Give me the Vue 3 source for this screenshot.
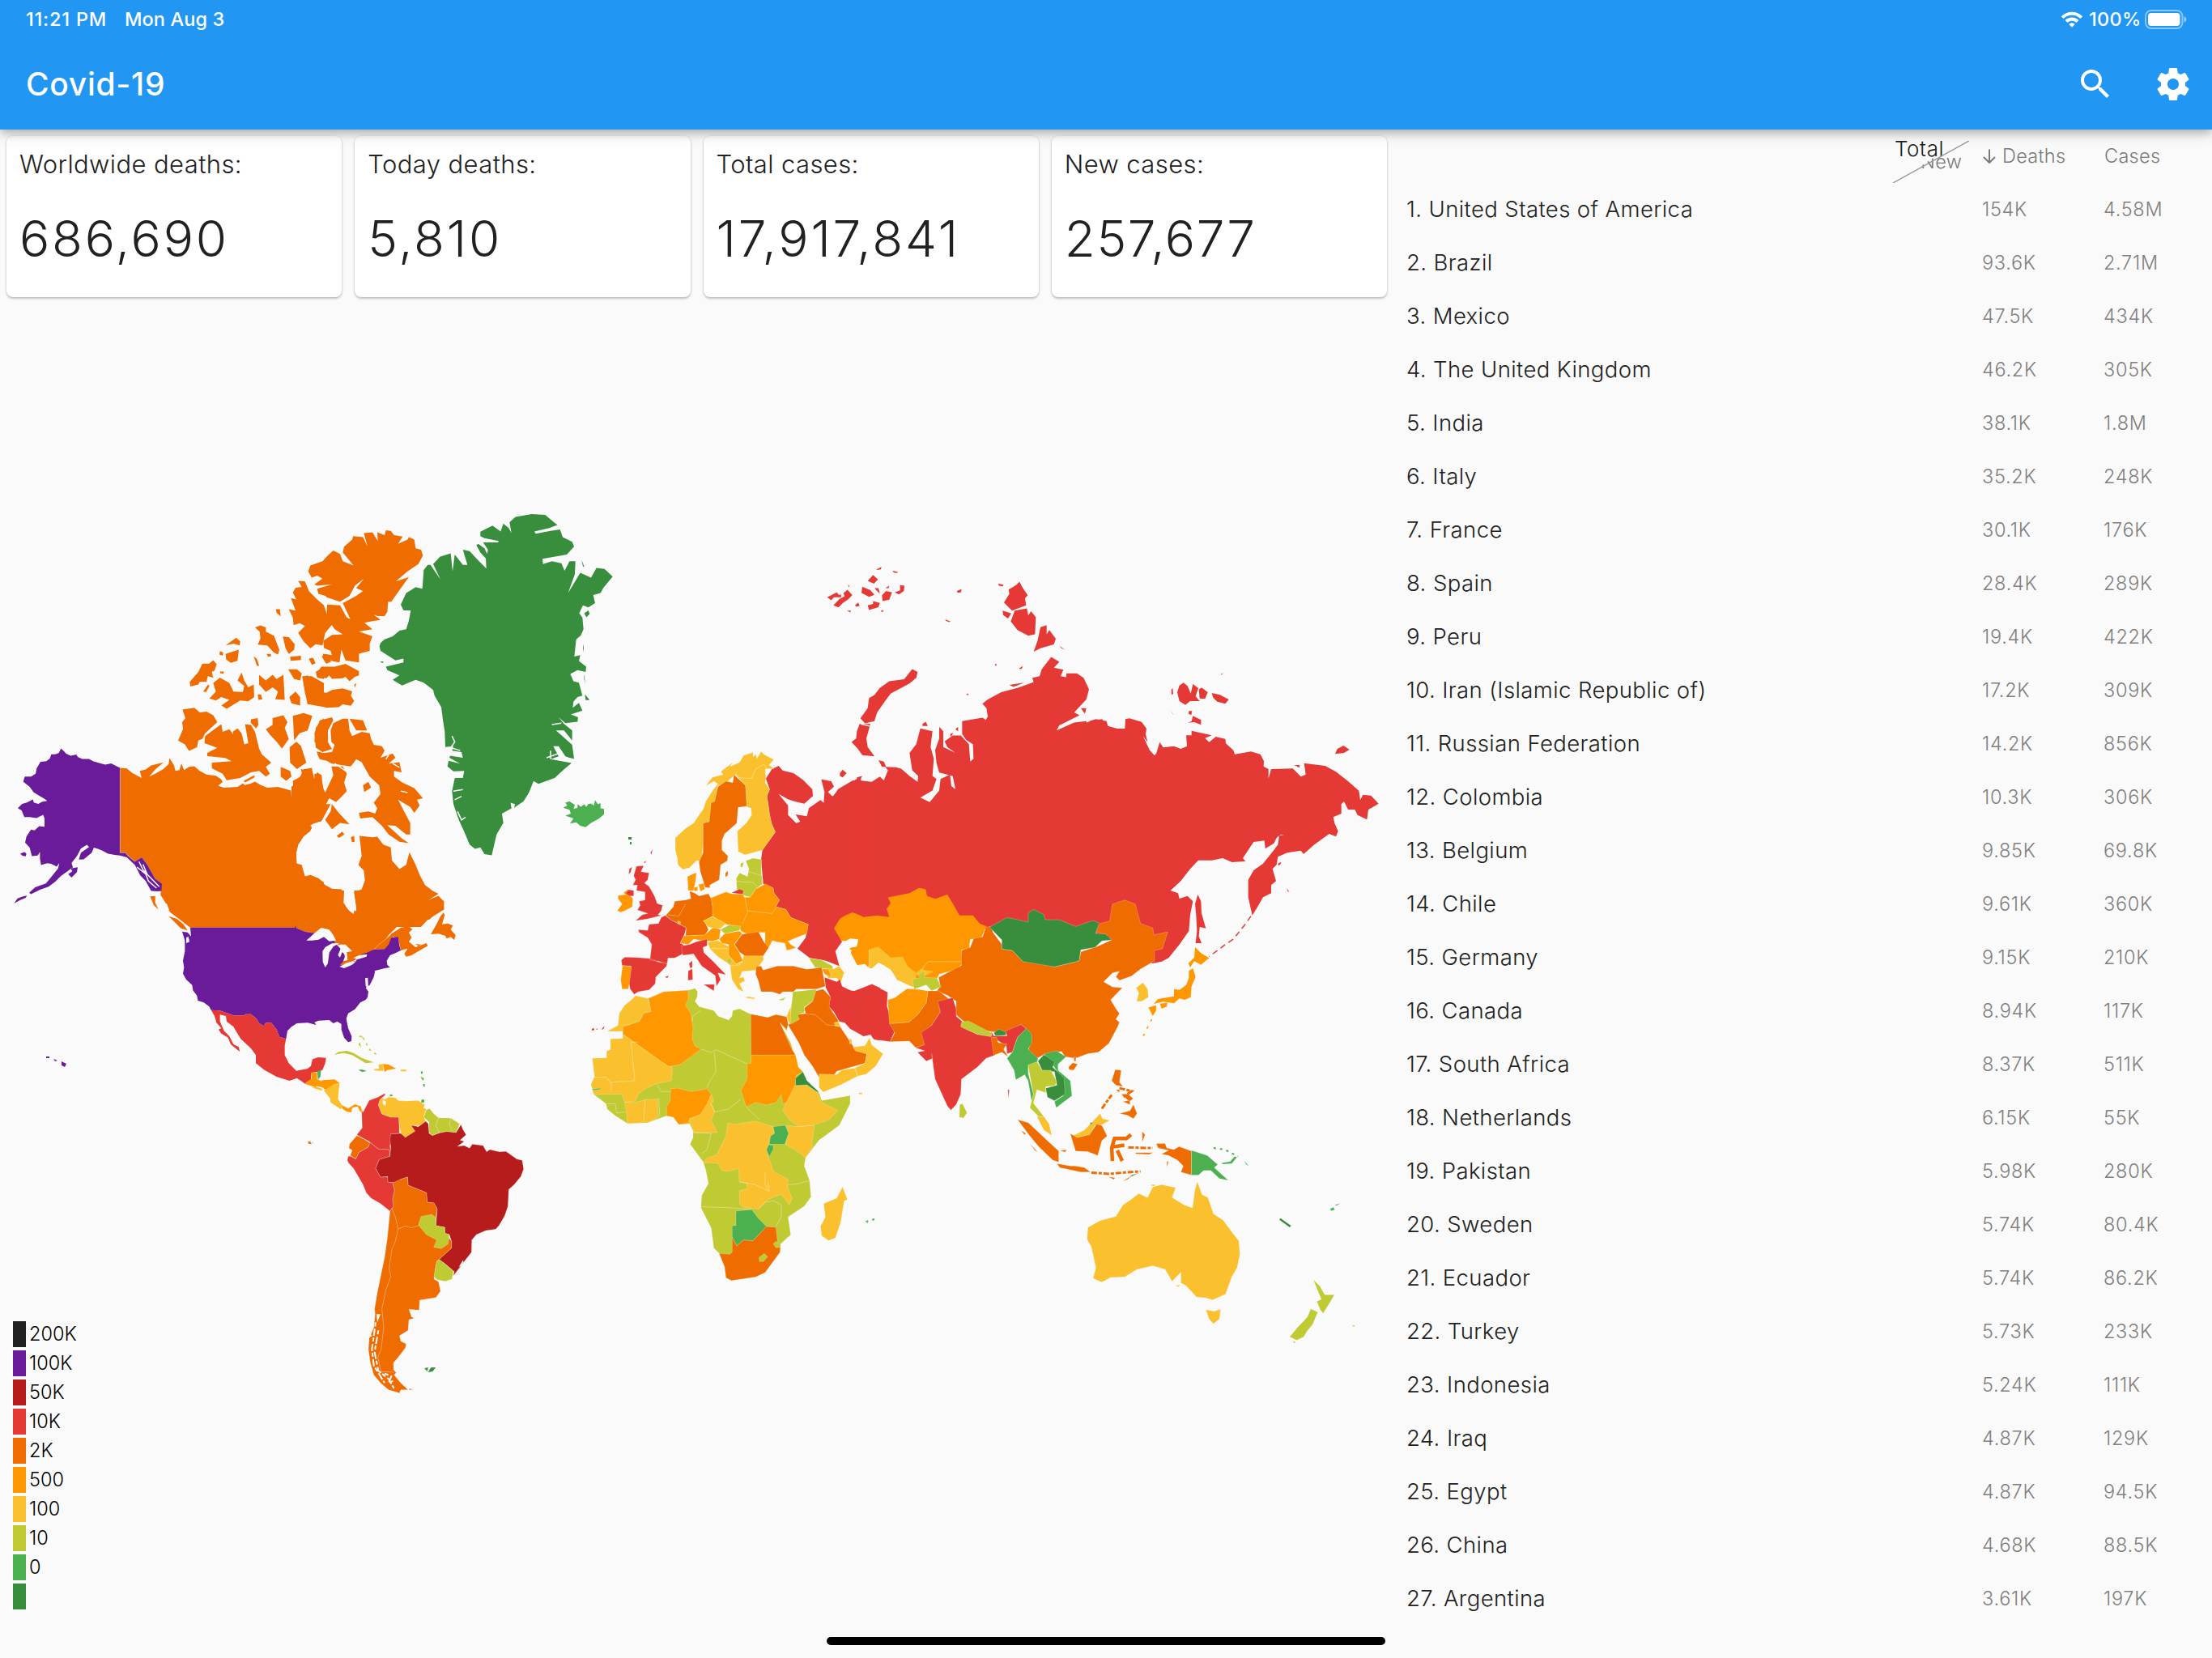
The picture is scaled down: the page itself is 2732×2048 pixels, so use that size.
<script setup>
const stats = [
  { label: 'Worldwide deaths:', value: '686,690' },
  { label: 'Today deaths:', value: '5,810' },
  { label: 'Total cases:', value: '17,917,841' },
  { label: 'New cases:', value: '257,677' },
]

const countries = [
  ['United States of America', '154K', '4.58M'],
  ['Brazil', '93.6K', '2.71M'],
  ['Mexico', '47.5K', '434K'],
  ['The United Kingdom', '46.2K', '305K'],
  ['India', '38.1K', '1.8M'],
  ['Italy', '35.2K', '248K'],
  ['France', '30.1K', '176K'],
  ['Spain', '28.4K', '289K'],
  ['Peru', '19.4K', '422K'],
  ['Iran (Islamic Republic of)', '17.2K', '309K'],
  ['Russian Federation', '14.2K', '856K'],
  ['Colombia', '10.3K', '306K'],
  ['Belgium', '9.85K', '69.8K'],
  ['Chile', '9.61K', '360K'],
  ['Germany', '9.15K', '210K'],
  ['Canada', '8.94K', '117K'],
  ['South Africa', '8.37K', '511K'],
  ['Netherlands', '6.15K', '55K'],
  ['Pakistan', '5.98K', '280K'],
  ['Sweden', '5.74K', '80.4K'],
  ['Ecuador', '5.74K', '86.2K'],
  ['Turkey', '5.73K', '233K'],
  ['Indonesia', '5.24K', '111K'],
  ['Iraq', '4.87K', '129K'],
  ['Egypt', '4.87K', '94.5K'],
  ['China', '4.68K', '88.5K'],
  ['Argentina', '3.61K', '197K'],
]

const legend = [
  ['black', '200K'],
  ['purple', '100K'],
  ['maroon', '50K'],
  ['red', '10K'],
  ['orange', '2K'],
  ['amber', '500'],
  ['yellow', '100'],
  ['lime', '10'],
  ['green', '0'],
  ['forest', ''],
]

// Each sheet has its own local grid; `at` places it on the map.
// A shape is [fill class, path]; classes starting with "line" are open strokes.
const sheets = [
  {
    name: 'canada-east', at: 'translate(360 620) scale(.33333 .35714)', shapes: [
      ['orange', 'M0 985L25 965 45 925 75 920 85 960 95 935 112 945 115 985 125 1005 135 985 155 945 148 915 190 915 205 940 195 970 205 1000 185 1020 165 1038 140 1025 128 1045 145 1045 128 1075 110 1105 85 1108 70 1120 75 1130 45 1150 25 1180 17 1215 18 1250 38 1255 50 1297 72 1292 100 1302 125 1325 150 1338 185 1340 192 1350 190 1385 200 1400 215 1415 230 1425 233 1412 242 1420 240 1400 236 1375 232 1350 260 1340 272 1310 268 1275 248 1255 260 1225 255 1180 252 1155 300 1160 318 1158 340 1185 368 1195 372 1240 400 1270 425 1255 437 1212 460 1255 475 1290 495 1325 530 1350 503 1378 545 1362 562 1380 565 1410 530 1430 505 1445 480 1470 0 1470Z'],
      ['orange', 'M62 240L70 220 115 205 135 185 155 168 180 180 190 205 230 220 190 175 195 155 225 130 228 118 265 122 282 155 268 108 300 105 320 135 318 105 345 115 350 98 368 100 380 115 412 120 395 145 430 130 435 122 455 130 460 160 480 165 487 185 470 215 430 240 386 275 435 260 400 305 370 345 358 345 355 380 345 395 320 395 305 390 330 408 300 412 270 418 300 440 250 448 300 465 290 490 290 515 250 525 250 555 200 548 185 510 178 555 150 550 115 535 118 525 150 530 145 515 120 505 118 480 150 460 190 458 160 440 130 400 132 355 180 358 205 400 218 405 190 350 240 325 265 308 240 298 268 265 235 290 215 325 180 345 130 330 120 318 140 300 175 290 125 325 100 318 95 300 150 285 95 290 85 285 115 265 95 255 75 262Z'],
      ['orange', 'M92 600L110 570 160 570 200 560 250 585 250 600 235 605 215 620 200 605 190 610 150 612 140 600 130 610 110 608ZM40 605L60 600 92 630 90 655 130 660 150 650 190 645 225 655 220 670 232 688 220 705 190 700 175 710 130 712 90 700 60 700 50 660Z'],
      ['orange', 'M5 740L45 730 77 740 60 790 30 800 10 825ZM90 850L85 800 105 755 150 745 155 755 135 790 135 830 150 855 115 865ZM145 790L155 765 190 750 210 750 215 790 225 810 260 795 290 800 295 820 305 840 335 845 345 860 330 885 375 870 385 885 360 905 400 900 408 935 380 930 380 950 410 970 455 990 487 1025 465 1030 475 1050 455 1075 440 1055 395 1030 420 1075 440 1110 440 1150 425 1150 385 1120 355 1118 410 1165 435 1180 400 1175 360 1150 335 1120 300 1090 255 1095 250 1075 285 1070 310 1078 318 1060 305 1040 330 1010 325 980 290 950 260 900 240 890 220 915 150 905 130 895 105 890 95 870 150 865 160 840 148 830ZM215 750L265 755 280 790 240 790ZM265 980l20-12 10 20-25 15ZM168 1155l20-15 8 10-20 12ZM220 1160l12-5 2 20-10 2ZM125 1100L145 1070 150 1045 175 1075 215 1115 180 1110 150 1132ZM112 535l20-8 15 25-18 8ZM66 545l15-5 8 18-12 5ZM232 632l8-5-4 15Z'],
      ['line-sea', 'M160 905L200 930 240 905 232 925 262 960 230 950M360 875L350 890M375 905L400 918M405 1000L430 1005'],
    ],
  },
  {
    name: 'canada-west', at: 'translate(0 620) scale(.33333 .34439)', shapes: [
      ['orange', 'M445 954L470 956 490 972 505 980 525 990 518 965 540 960 560 945 606 934 575 960 553 985 575 975 605 958 625 940 628 918 645 945 650 965 665 962 672 938 682 962 700 950 720 948 740 965 765 978 800 982 820 995 825 1005 808 1018 830 1025 880 1022 900 1010 910 1018 912 1040 920 1068 905 1040 890 1020 930 1010 945 1003 965 1015 990 1025 1030 1022 1060 1030 1078 1035 1080 1060 1088 1035 1085 1000 1105 990 1120 980 1115 958 1150 965 1165 1000 1165 975 1180 975 1195 1010 1200 1040 1200 1120 1180 1148 1150 1158 1112 1150 1155 1165 1150 1180 1125 1200 1105 1230 1097 1260 1100 1300 1115 1303 1130 1343 1150 1338 1180 1350 1200 1365 1200 1538 1160 1548 1120 1530 1095 1525 707 1525 690 1515 665 1495 650 1480 625 1465 640 1450 615 1440 595 1410 598 1370 575 1352 545 1300 525 1275 500 1290 475 1270 465 1258 445 1258Z'],
      ['orange', 'M676 745L720 738 740 755 765 752 790 765 805 790 760 830 750 850 735 855 730 880 700 893 685 870 660 856 678 815 675 790 687 775ZM760 840L820 797 825 825 850 815 865 835 862 825 880 812 895 830 905 870 920 865 908 797 930 800 945 825 960 885 970 905 1005 935 985 950 1000 975 985 985 960 965 930 970 890 990 840 998 825 975 785 955 785 935 858 930 835 918 768 912 768 900 805 882 758 865ZM985 815L1010 800 1010 775 1050 765 1065 790 1055 810 1070 850 1045 885 1025 860 1000 835ZM1073 880L1098 860 1115 875 1135 935 1100 958 1075 935ZM1105 283L1130 285 1145 320 1175 350 1200 370 1210 400 1235 435 1205 470 1195 515 1170 510 1150 525 1125 500 1105 470 1130 445 1110 435 1088 442 1085 415 1070 385 1095 390 1078 345 1098 350 1085 325 1095 308 1118 305Z'],
      ['orange', 'M776 705L800 680 790 650 815 630 850 650 865 680 900 682 905 660 880 640 895 612 905 640 920 665 940 655 942 700 920 715 890 712 840 742 820 730 850 710 820 700 800 712ZM703 645L735 610 750 580 775 580 790 568 803 582 795 605 785 610 790 630 770 625 765 645 740 645 735 655 705 662ZM753 680l18-25 5 5-12 22ZM960 620L985 640 1010 620 1025 635 1050 620 1055 710 1020 708 1030 680 1010 665 985 682 960 655ZM1072 700L1095 680 1112 700 1112 730 1080 722ZM836 515L875 487 890 500 888 515 865 508ZM836 545L885 530 880 570 855 577 838 565ZM945 450L965 443 985 450 985 465 1015 480 1035 530 1030 547 1015 540 990 515 955 512 965 490 962 465ZM1048 483L1070 485 1092 510 1090 530 1070 545 1058 525ZM1022 385l15 0 3 25-15-12ZM1075 555l40-3 0 15-38 3ZM1068 600L1100 600 1118 615 1112 640 1090 635ZM940 553l12 10 8 25-8 0ZM1145 562l12-3 10 20-12 5ZM815 535l12 5-2 12-12-5ZM930 780l25-5 2 25-8 12-20-20ZM1040 950L1075 965 1080 985 1060 1000 1040 985ZM955 690l12 0 5 18-14 2ZM988 545l15 0 2 8-12 2ZM815 608l15 0-2 8-12-2ZM1120 625l35 0 45 25 0 85-60-10-8-60ZM1170 610l30-20 0 45-25-5ZM1165 860L1170 810 1200 775V890ZM1173 895l27 5 0 25-15-2ZM903 1000l40-20 0 8-35 18Z'],
      ['purple', 'M445 954L428 946 412 938 390 942 365 936 345 930 330 922 305 922 288 915 283 906 262 910 245 903 238 895 226 884 218 900 205 905 190 905 185 920 172 930 150 932 136 955 132 975 115 985 92 985 86 1003 110 1022 125 1042 142 1052 165 1065 175 1072 155 1076 142 1083 125 1078 122 1067 100 1078 82 1083 66 1098 80 1106 90 1130 110 1130 135 1134 160 1122 165 1135 165 1165 145 1163 128 1178 115 1175 98 1200 93 1222 110 1240 118 1270 140 1268 148 1255 148 1280 152 1302 175 1296 190 1298 210 1308 220 1295 215 1315 190 1345 170 1368 130 1382 108 1402 115 1407 150 1390 180 1380 205 1362 225 1342 250 1325 270 1310 265 1295 285 1270 300 1243 322 1230 330 1238 300 1258 292 1283 310 1282 340 1258 348 1240 365 1245 378 1250 400 1262 425 1266 445 1268ZM445 1268L470 1275 500 1302 520 1340 540 1360 560 1395 585 1397 598 1395 600 1370 575 1352 545 1300 525 1275 500 1290 475 1270 465 1258 445 1258ZM52 1440L65 1422 85 1415 100 1412 95 1420 75 1428ZM253 1335L268 1325 262 1315 288 1310 285 1328 265 1347ZM75 1262l15-6 8 5-3 10-12-2Z'],
      ['line-sea', 'M515 1290L530 1320 560 1350 590 1380M508 1310L540 1335 550 1360 580 1385M530 1300L545 1335'],
      ['line', 'M445 954V1258L465 1258 475 1270 500 1290'],
    ],
  },
  {
    name: 'north-america', at: 'translate(180 1100) scale(.33333)', shapes: [
      ['orange', 'M165 137L140 118 110 95 90 80 60 0H735L733 45 755 80 770 88 782 70 772 0H1060L1085 12 1043 38 1090 28 1105 40 1105 70 1075 85 1050 108 1000 108 950 113 925 140 900 165 890 180 910 160 945 138 975 132 988 145 975 155 985 175 975 190 1000 210 1040 195 1045 205 1010 225 985 240 965 245 958 235 970 215 945 222 935 175 915 172 900 205 885 217 845 218 820 235 790 240 775 258 740 270 720 277 730 262 740 240 735 215 700 192 690 165 675 148 650 140 625 158 590 152 560 140 553 130 553 137Z'],
      ['orange', 'M1056 162L1075 130 1092 95 1103 82 1108 90 1098 125 1120 122 1138 130 1130 145 1148 165 1143 183 1130 172 1115 178 1110 168 1085 160ZM983 120l20 2 18 10-15 2ZM85 95L115 105 140 125 155 148 130 140 105 115ZM16 22L35 20 35 45 47 70 30 55ZM1000 198l20 2-10 6Z'],
      ['purple', 'M165 137H553V130L560 140 590 152 625 158 690 165 700 192 735 230 740 262 720 277 780 260 790 240 820 230 845 218 885 217 900 200 910 175 935 172 940 205 945 222 925 232 905 240 893 260 895 275 905 285 885 288 850 298 845 320 830 350 815 360 825 375 822 395 815 405 795 415 775 440 750 455 743 475 750 510 763 540 762 558 750 562 735 545 725 515 725 495 710 485 695 492 680 480 640 482 625 488 632 498 600 490 560 492 540 505 525 520 520 550 495 542 485 515 465 490 445 490 437 502 420 492 410 475 390 458 368 458 365 463 325 463 275 445 242 443 235 430 215 415 193 408 190 390 175 370 172 350 150 330 138 308 142 285 138 260 145 225 145 185 135 152 155 155 168 170Z'],
      ['orange', 'M710 193L750 205 765 225 800 240 775 258 740 270 720 277 732 262 740 240Z'],
      ['sea', 'M595 185L612 170 625 158 650 138 680 145 695 165 705 185 680 188 660 172 640 182 615 185ZM655 225L665 210 690 196 718 195 695 208 680 230 675 270 665 285 656 265ZM715 200L740 200 765 225 745 228 748 258 732 262 740 240 728 228 720 248 712 240 722 215ZM718 282L745 268 780 262 765 275 735 288ZM770 250L790 240 820 236 818 245 785 255ZM813 325l10-2 2 42-10-12ZM150 175l8-5 4 20-12 5ZM845 298l35-6-20 8Z'],
      ['red', 'M242 443L275 445 325 463 365 463 368 458 390 458 410 475 420 492 437 502 445 490 465 490 485 515 495 542 520 550 515 575 515 610 530 640 558 668 600 660 612 650 618 625 640 618 668 620 665 640 655 665 635 672 612 675 612 700 592 717 575 705 560 695 533 705 485 690 440 665 408 640 408 610 390 585 352 550 325 505 300 485 297 465 275 460 275 485 290 520 310 540 325 570 345 580 348 597 315 570 305 545 280 530 270 515 280 510 262 490 255 465Z'],
      ['amber', 'M612 675L635 675 635 700 650 705 630 730 592 717 592 712 615 697ZM640 715L655 703 700 700 718 713 700 718 685 728 668 740 655 730 635 725ZM727 795L750 808 775 792 797 800 803 822 795 820 785 800 765 805 762 822 745 820 728 808ZM880 643L900 645 928 660 895 665 885 673Z'],
      ['green', 'M636 672L650 663 647 690 638 702ZM788 665l12-2 18 5-15 5ZM1022 775h10v10h-12Z'],
      ['yellow', 'M615 730L635 728 655 735 652 742ZM660 742L690 722 718 713 712 772 730 800 722 810 685 785 683 770ZM845 662L865 660 862 645 880 643 880 668 848 667ZM945 664h20v6h-20Z'],
      ['lime', 'M698 608L715 598 745 594 770 602 800 620 845 637 815 640 790 625 765 610 735 602ZM785 540l15-2 5 10-5-4ZM788 570l6-8 4 20Z'],
      ['line-lime-dot', 'M805 545L830 590 860 612M1020 690L1032 712'],
      ['line-green-dot', 'M1022 670L1034 740M905 760L925 756'],
      ['line', 'M845 218L870 195 890 180 910 162'],
    ],
  },
  {
    name: 'south-america', at: 'translate(380 1300) scale(.33333)', bordered: true, shapes: [
      ['red', 'M182 305L202 280 200 215 205 222 228 178 262 165 285 152 288 157 268 175 262 195 275 228 308 240 338 240 340 300 308 302 313 320 305 345 308 385 300 360 262 358 228 330 200 315Z'],
      ['red', 'M150 385L160 385 178 395 190 370 225 350 230 332 262 358 302 360 305 385 265 397 252 430 270 462 297 462 297 480 315 483 322 510 315 545 318 570 305 588 270 560 235 540 217 520 205 490 170 430 152 410 147 400Z'],
      ['yellow', 'M268 175L277 168 285 175 300 165 325 168 335 178 365 180 410 178 435 195 428 205 440 210 430 235 438 258 410 272 383 270 398 292 375 315 350 312 342 285 337 240 308 240 275 228 262 195Z'],
      ['sea', 'M278 175L290 182 288 198 278 190Z'],
      ['lime', 'M440 212L452 208 468 228 485 242 530 243 563 265 550 297 515 293 488 298 460 308 450 295 450 258 430 240Z'],
      ['maroon', 'M308 302L345 300 362 315 398 292 383 270 410 275 438 255 447 265 450 300 462 308 490 298 515 293 550 297 568 267 575 285 587 305 565 325 580 330 555 348 580 345 600 355 610 340 650 345 663 368 675 360 710 368 735 367 775 395 795 400 800 432 790 460 765 490 745 508 742 570 730 605 710 640 697 655 660 660 625 675 608 695 607 740 580 775 540 828 543 812 505 780 485 768 533 725 533 700 525 675 508 670 508 648 475 642 480 580 468 558 443 555 440 520 372 492 370 462 345 470 325 483 297 480 297 460 270 462 252 430 265 397 305 385 308 350 305 325Z'],
      ['orange', 'M155 340L182 308 210 322 230 335 225 350 190 370 178 395 158 382 165 362 153 355Z'],
      ['orange', 'M315 483L345 470 370 462 372 492 440 520 443 555 468 558 480 580 475 610 475 642 510 670 533 700 533 725 485 768 475 790 468 840 485 850 492 885 475 908 415 918 413 955 375 952 385 980 395 985 375 990 372 1030 340 1050 345 1070 365 1080 362 1095 335 1130 318 1150 318 1175 328 1187 320 1195 345 1225 372 1250 345 1250 340 1262 300 1250 270 1225 245 1195 232 1150 225 1100 228 1060 245 1020 250 970 248 950 258 890 285 760 295 690 303 610 305 588 318 570 315 545 322 510Z'],
      ['lime', 'M410 640L420 608 460 600 475 612 475 642 508 648 508 670 525 675 520 710 495 727 467 722 478 695 440 675ZM478 772L490 768 540 810 535 840 510 848 480 842 468 830Z'],
      ['sea', 'M575 770l-15 25 10-5 8-15ZM255 970l15 0-12 30Z'],
      ['line', 'M312 578L325 610 335 655 325 700 312 730 302 800 308 830 290 880 275 950 282 1020 272 1100 260 1130 272 1183 320 1185M335 655L360 643 385 650 410 642M485 242L475 270 488 298M530 243L525 265 535 290'],
      ['line-sea-dot', 'M252 1000L238 1100 245 1160 285 1225M262 1030L248 1110 262 1180 300 1210 320 1245M285 1190L310 1200 300 1225 320 1215M228 1040L240 1060M568 325L590 320 605 340'],
      ['forest', 'M432 1170l15-3-4 16ZM445 1185l12-18 18 0-12 16Z'],
      ['orange', 'M375 1246l18 2-16 3ZM0 330l10 0 5 10-12-2ZM16 332h3v3h-3Z'],
    ],
  },
  {
    name: 'greenland', at: 'translate(360 620) scale(.33333 .35714)', shapes: [
      ['forest', 'M326 500L330 488 345 475 375 465 400 445 425 440 435 410 442 375 415 375 405 355 425 315 460 295 485 300 490 235 505 218 515 218 552 268 525 215 550 190 590 178 597 240 605 182 635 218 652 218 635 165 660 170 690 200 722 230 720 195 700 175 685 150 692 145 715 160 725 180 728 165 710 140 765 140 768 135 715 125 700 118 700 103 745 82 775 102 785 75 805 90 815 108 808 70 830 52 890 42 940 45 985 80 955 90 900 102 905 110 960 100 995 95 1005 122 1040 138 1047 155 1020 182 930 197 932 215 965 205 1000 212 1012 238 1030 205 1052 205 1050 250 1025 315 1070 245 1110 262 1130 228 1160 232 1190 258 1155 298 1145 315 1118 322 1125 350 1100 365 1080 358 1066 385 1078 400 1082 440 1072 462 1055 475 1048 535 1070 530 1065 550 1092 570 1090 588 1060 582 1033 595 1045 620 1065 625 1078 670 1060 675 1045 690 1042 712 1065 695 1078 722 1035 735 1062 745 1060 760 1015 765 990 745 1010 768 1040 790 1040 825 1010 790 980 790 1040 840 1047 888 1030 885 1015 880 990 845 970 845 990 880 960 890 1038 903 1010 925 975 955 915 975 897 965 880 1005 860 1035 825 1058 828 1045 812 1040 815 1060 780 1078 785 1110 760 1150 750 1190 742 1222 715 1218 700 1195 680 1200 660 1185 640 1140 620 1100 600 1045 595 1000 605 955 635 955 640 930 600 932 578 915 582 895 625 905 585 885 588 878 635 885 630 865 595 860 600 845 570 848 568 795 562 760 555 710 530 670 525 650 490 625 460 615 410 635 375 615 400 600 355 582 350 570 415 555 415 542 385 548 355 530 330 515ZM1075 200l10 25-5-2ZM1085 385l15-10 5 12-12 12ZM1080 490l3 15-3 15ZM1085 595l3 35-4-20ZM1087 665l18 20-15 0ZM328 552l14 0-5 6Z'],
      ['green', 'M1007 1058L1022 1050 1015 1040 1030 1035 1050 1048 1045 1062 1060 1058 1060 1045 1072 1055 1085 1045 1092 1055 1100 1045 1110 1043 1120 1050 1125 1032 1135 1045 1145 1042 1145 1060 1158 1062 1158 1080 1140 1095 1110 1110 1090 1125 1070 1120 1055 1108 1032 1112 1045 1095 1015 1085 1035 1078 1030 1065Z'],
      ['line-sea', 'M965 770L1000 765M945 885L990 870M960 860L960 890M600 1000L635 995M605 1030L630 1018M615 1070L630 1100 645 1090M595 810L605 830 590 850 625 860'],
    ],
  },
  {
    name: 'russia-centre', at: 'translate(980 680) scale(.33333 .35714)', shapes: [
      ['red', 'M165 825L220 795 235 800 235 785 255 780 245 795 290 800 320 782 335 795 350 760 340 748 380 750 400 755 430 780 460 800 462 780 440 760 430 700 455 670 470 615 515 625 508 680 520 720 515 780 530 790 515 830 470 855 505 870 540 830 545 790 580 775 585 815 600 825 590 780 540 768 530 735 525 690 540 650 540 610 555 625 555 680 600 700 570 680 560 660 590 640 620 640 650 670 655 730 667 720 665 670 640 655 625 635 625 590 700 578 712 585 702 600 720 575 715 545 700 530 720 515 770 490 830 475 890 455 885 440 912 435 920 410 955 368 985 385 965 405 1000 412 990 435 1010 438 1012 425 1050 425 1075 440 1095 480 1085 515 1040 560 1060 570 985 605 975 622 1040 595 1085 590 1090 620 1100 588 1145 583V1330L725 1310 600 1310 150 1340H120V850L150 850Z'],
      ['red', 'M215 662L232 650 235 625 245 600 285 600 270 650 275 680 300 712 255 708 238 685ZM248 580L275 545 280 510 300 500 320 475 355 452 410 445 440 410 460 420 455 440 430 460 360 495 340 520 310 560 300 590 265 598ZM315 725l20 5 8 18-15 0ZM172 770l10-12 15 12-15 15-10-5ZM478 600l12-8 8 15-20 0ZM580 635l12-5-8 15ZM600 618l10-8 0 15ZM555 592l14 0ZM1065 545l20 0-5 20ZM640 497l8-3-2 8Z'],
      ['red', 'M125 162l35-17 10 10 5-5 2 12-27 0-10 10ZM148 190l22-22 20-10-5-10 15-12 18 18-15 15-20 12-8 8-8 8ZM255 125l30 12 15 16-20 7-28-14ZM275 105l20-20 18 15-15 15ZM328 155l15-15 22 5-10 25-25 5ZM375 145l20-7 0-18 16 2-2 18-18 12ZM275 190l20-5 0-10 25 6-5 15-35 10ZM300 130l15 0 5 20ZM228 190l12-10 5 12-12 2ZM308 65l18-8-2 8-15 2ZM368 70l20 5-5 3-12-2ZM605 140l18-6-2 10-12 2ZM562 238l20 8-5 2-12-5ZM758 115l20 3-2 6-15-2ZM340 130l15-8-2 8ZM322 210l10-5 0 8ZM835 408l15-8-5 10ZM747 393l5 0 0 5-5 0ZM202 120h5v8ZM198 208l14 0 0 6Z'],
      ['red', 'M780 180L800 150 797 135 825 120 837 108 850 130 868 155 858 165 862 190 810 208ZM775 208l32 10-12 17-18-12ZM805 245L820 208 865 200 870 225 880 210 898 230 895 290 870 295 850 285 830 275ZM890 350L905 310 915 265 938 258 938 290 948 275 972 305 965 325 915 338ZM985 330l20 12-12-4ZM800 465l55-8-40 15Z'],
      ['amber', 'M150 1300L170 1275 210 1250 230 1255 260 1268 310 1262 355 1268 345 1240 360 1220 350 1200 430 1185 465 1167 490 1172 495 1195 525 1205 570 1190 590 1220 615 1262 665 1262 690 1290 715 1300 695 1340 655 1345 650 1380 622 1380 625 1430 600 1450 540 1465 525 1490 455 1500 415 1500 280 1440 240 1440 205 1380 240 1350 180 1350 150 1320Z'],
      ['yellow', 'M280 1380L315 1370 360 1408 405 1405 425 1440 455 1460 490 1435 480 1450 520 1455 490 1470 455 1468 445 1510 400 1495 350 1450 280 1445Z'],
      ['sea', 'M150 1385L180 1358 210 1342 240 1345 235 1370 200 1375 215 1382 210 1400 230 1435 265 1430 285 1450 315 1425 335 1435 360 1450 385 1485 430 1505 400 1515 385 1540 370 1545 350 1525 290 1500 220 1525 185 1505 190 1465 165 1420Z'],
      ['line', 'M480 1440L500 1422 620 1422M280 1445V1380'],
      ['line-sea', 'M250 600L285 608'],
    ],
  },
  {
    name: 'russia-east', at: 'translate(1340 760) scale(.33333)', shapes: [
      ['red', 'M0 400L40 385 80 392 85 410 120 420 148 420 150 385 165 382 210 395 228 420 225 440 232 470 215 448 240 500 258 520 265 510 277 470 290 490 330 485 355 495 378 485 375 445 395 445 395 428 470 445 445 455 460 470 485 450 520 458 522 475 550 500 555 515 615 505 650 515 663 540 662 560 680 570 680 605 690 570 770 568 800 598 818 590 812 548 890 558 930 580 975 615 1015 650 1020 685 1030 665 1060 668 1088 698 1060 715 1050 720 1045 757 1010 740 1000 720 975 720 960 690 950 700 950 735 920 748 925 770 938 800 930 820 905 810 850 850 810 885 800 872 750 880 715 895 710 925 695 940 708 985 690 1000 690 1030 660 1045 640 1080 620 1112 605 1045 605 980 625 945 660 920 700 870 715 850 720 815 738 815 725 812 710 825 700 845 668 865 665 835 625 840 585 900 595 912 545 915 510 900 470 908 420 908 390 940 355 985 317 1020 345 1030 350 1050 380 1040 400 1060 390 1110 385 1170 350 1220 310 1270 285 1283 250 1290 0 1150Z'],
      ['red', 'M418 1035L430 1060 432 1105 448 1160 425 1155 422 1190 432 1215 410 1215 415 1170 412 1110 408 1070ZM342 285L350 260 365 250 380 262 392 290 400 255 420 270 410 300 425 318 390 318 372 332 350 318ZM422 275L432 268 455 285 445 310 425 308ZM470 288L500 295 533 312 520 328 490 320 475 305ZM380 398l15-5 5-20 30 15 0 18-25-10ZM385 355l12 0-3 15-10-5ZM320 275l5-5 2 22-6 2ZM318 355l10 16-4-8ZM502 220l10-6-4 6ZM927 514L935 495 958 483 980 498 960 510ZM775 555l20 0 0 10ZM748 1012l10 14-7-4ZM715 920l12-6-2 8-8 6ZM12 1020l5 5Z'],
      ['line-red-dot', 'M615 1115L590 1150 550 1200 520 1220 460 1265'],
      ['amber', 'M383 1290L405 1268 408 1230 430 1252 460 1270 430 1295 405 1282 390 1305ZM385 1318L400 1308 410 1340 395 1375 392 1415 370 1425 350 1420 330 1438 290 1432 255 1440 270 1422 330 1412 330 1385 350 1388 375 1370 385 1345Z'],
      ['yellow', 'M190 1380L215 1362 232 1385 235 1415 210 1430 192 1430 200 1400Z'],
    ],
  },
  {
    name: 'asia-oceania', at: 'translate(1040 1100) scale(.43367 .3699)', bordered: true, shapes: [
      ['orange', 'M410 122L425 120 430 140 455 180 455 195 485 200 515 237 560 240 605 255 675 235 680 205 730 185 768 165 760 150 730 140 722 143 735 110 762 102 770 45 805 32 835 45 850 110 885 125 888 148 928 138 912 195 890 200 890 235 850 262 825 285 790 300 780 288 790 270 770 275 745 305 770 322 798 325 765 365 780 395 790 410 780 430 790 440 785 455 760 510 730 540 700 545 665 560 635 555 625 537 580 545 555 560 530 535 540 490 525 462 510 447 465 475 430 472 380 465 345 435 325 415 325 370 300 350 270 335 280 320 275 290 340 250 340 200 365 190 375 160 400 155ZM645 590l12-15 14 5-12 20-12-2ZM660 555h6l0 15-5 0Z'],
      ['forest', 'M420 122L470 90 530 105 530 75 545 63 575 80 578 97 620 98 665 120 715 100 732 108 722 143 750 145 768 165 740 168 720 190 680 198 675 235 605 255 515 237 485 200 455 195 455 165Z'],
      ['red', 'M0 330L35 335 85 312 130 340 128 385 140 435 150 470 137 505 90 497 80 480 60 485 0 430Z'],
      ['amber', 'M130 365L150 358 185 328 215 330 245 335 240 375 215 415 190 440 135 445Z'],
      ['lime', 'M200 295L222 292 218 280 235 268 235 290 270 292 282 322 255 335 240 315 205 330Z'],
      ['orange', 'M135 445L190 440 215 415 240 375 245 335 275 335 305 362 275 375 280 405 255 450 235 470 238 515 210 525 192 503 137 505 150 475Z'],
      ['red', 'M272 370L315 358 325 395 325 420 345 440 340 455 385 480 425 487 425 470 432 485 470 485 465 470 510 447 525 462 500 490 485 540 470 545 468 520 430 490 435 550 410 560 385 590 340 630 338 680 325 715 310 733 300 720 265 630 255 545 258 560 240 570 215 540 235 535 210 525 235 515 225 475 255 450 280 405ZM472 665h4l-2 30Z'],
      ['orange', 'M425 492L440 490 445 508 470 512 460 530 473 555 455 540 432 550Z'],
      ['lime', 'M340 440L360 435 425 475 425 488 385 480 338 455ZM335 715l8-3 13 30-10 18-12-3Z'],
      ['forest', 'M432 475l15-12 20 10 0 10-30 2Z'],
      ['green', 'M470 560L485 540 500 490 525 460 540 480 540 510 530 530 558 560 555 575 530 585 530 610 545 680 540 705 530 635 520 615 495 632 490 600ZM575 545L610 535 638 555 615 580 615 600 650 635 655 685 610 725 605 705 630 685 632 640 605 590Z'],
      ['forest', 'M558 570L575 548 605 572 600 590 632 625 635 680 605 702 585 690 580 660 612 650 605 605 570 600Z'],
      ['lime', 'M530 582L555 572 570 600 595 600 612 640 605 652 580 655 580 675 555 665 545 710 575 755 560 755 535 725 545 680 537 630Z'],
      ['yellow', 'M555 755L575 755 590 780 597 818 575 800ZM655 820L690 800 735 745 742 762 762 768 740 782 720 785 705 815 670 825Z'],
      ['orange', 'M650 812L670 825 705 815 725 780 740 785 755 820 740 835 728 885 700 872 665 870ZM500 765L530 775 580 830 617 870 617 907 600 900 560 855 535 820ZM612 912L650 920 665 920 690 925 708 940 680 940 620 925ZM758 955l20 5-5 5ZM800 970l28-20-15 15ZM778 598L795 600 790 640 800 655 780 650 768 635ZM790 745L820 735 830 715 840 745 830 762 812 750ZM795 680l20 0 14 15-10 10ZM800 705l20-5 0 15ZM780 665l10 0 0 10ZM895 845L920 845 925 860 945 865 960 855 995 870 995 950 965 940 972 920 955 900 930 885 910 880 930 868 900 860ZM855 805l8 10-8 25ZM835 875l50 0-10 6-38-2ZM925 905l5 0-5 18ZM620 868l20-2-5 8ZM510 800l14 12-5 3ZM535 845l22 28-8-5Z'],
      ['line-orange', 'M770 903L768 860 776 828 810 828 823 815M772 856L804 850M784 868L798 903'],
      ['line-orange-dot', 'M710 942L760 946 820 940 850 938M740 728L768 682M790 660L825 670 800 690M815 858L885 860'],
      ['green', 'M995 868L1040 885 1070 915 1060 925 1100 968 1075 962 1050 935 1030 935 1015 950 995 950ZM1080 910L1105 905 1118 888 1125 890 1110 912 1085 914ZM1145 902l14 18-8-5ZM705 775l10 0-6 8ZM1390 1062l10-4 3 8-10 4ZM1403 1050l16-6-10 8Z'],
      ['line-green-dot', 'M1058 860L1090 865 1128 888M68 1106L94 1097'],
      ['forest', 'M820 952l26-10-20 12ZM1246 1095L1278 1120 1272 1122Z'],
      ['line-forest', 'M1247 1097L1277 1122'],
      ['amber', 'M872 390L895 383 895 400 885 420ZM905 378l22-4-2 14-15 7Z'],
      ['line-amber-dot', 'M882 430L855 492'],
      ['yellow', 'M700 1125L735 1102 780 1088 800 1050 825 1030 845 1012 870 1025 885 990 910 982 950 992 940 1025 975 1050 998 1060 1005 1000 1012 972 1025 1015 1042 1025 1058 1080 1085 1100 1110 1140 1130 1170 1133 1215 1125 1260 1110 1290 1092 1348 1055 1367 1035 1360 1010 1358 980 1320 965 1310 965 1275 940 1305 920 1265 885 1253 840 1265 805 1290 765 1292 740 1308 715 1295 723 1260 710 1190 698 1165ZM1036 1400L1060 1405 1078 1398 1075 1430 1058 1447 1045 1430ZM880 982h12v4h-12ZM950 1318h14l-8 5ZM48 675h10v5h-10ZM20 500l8-2 0 18Z'],
      ['lime', 'M1342 1300L1360 1320 1375 1350 1402 1350 1390 1375 1370 1412 1362 1400 1352 1372 1365 1365ZM1275 1490L1300 1455 1325 1425 1335 1397 1355 1408 1340 1450 1325 1470 1315 1490 1295 1502ZM1454 1452h6v4h-6ZM1286 1505h4v6h-4Z'],
    ],
  },
  {
    name: 'europe', at: 'translate(700 900) scale(.33333)', bordered: true, shapes: [
      ['red bare', 'M738 185L760 150 785 138 800 155 840 165 875 190 910 225 912 250 880 278 845 270 820 262 785 242 820 285 820 320 850 350 865 345 848 318 890 325 897 295 940 265 952 275 955 235 943 188 980 195 990 215 968 235 985 252 1005 228 1050 200 1090 178V200H1100V680L1060 680 1015 700 990 740 1020 790 995 825 1010 880 960 860 900 850 855 815 885 775 895 725 830 700 812 670 775 660 788 635 768 610 765 590 728 575 720 485 725 450 773 383 760 355 752 320 742 250 752 225Z'],
      ['yellow', 'M402 405L440 370 470 350 490 320 505 300 515 270 540 230 560 205 545 195 515 212 540 180 580 170 570 160 615 125 605 140 640 125 655 100 690 88 690 105 700 95 705 110 720 85 730 95 767 115 750 135 768 148 735 150 738 185 735 200 752 225 742 250 752 320 760 355 773 383 725 450 660 468 635 455 632 380 665 350 685 320 683 295 667 290 662 210 625 170 590 200 560 212 548 275 530 345 505 350 505 430 498 490 480 490 455 515 430 522 412 505 410 480 402 450Z'],
      ['orange', 'M505 350L528 345 535 275 548 270 560 215 590 195 615 200 620 170 635 185 662 210 667 288 635 292 630 350 585 390 575 415 575 450 597 472 595 490 570 505 565 560 530 580 530 590 513 588 495 530 490 495 505 460 505 430ZM588 535l10-8-2 18-8 5Z'],
      ['amber', 'M447 548L480 533 478 560 470 600 450 600ZM470 590l15-5 0 15-12 3ZM488 578l20-5 3 22-15 8Z'],
      ['lime', 'M663 490L690 480 722 485 720 520 725 575 700 595 680 625 655 618 630 595 628 555 640 535 670 548 675 520ZM643 500l12-5-2 15-8 5Z'],
      ['red', 'M610 608L640 595 655 600 652 614Z'],
      ['amber', 'M533 628L590 605 610 612 652 614 658 625 680 625 700 595 735 575 765 590 768 610 788 635 775 660 812 670 830 700 895 725 890 760 850 775 820 788 830 800 850 812 815 822 808 795 775 790 762 785 748 812 735 810 735 755 710 755 670 762 645 750 640 735 590 725 540 695 540 660Z'],
      ['amber', 'M187 675L205 650 190 630 190 618 218 615 210 608 228 595 228 612 245 630 243 660 215 675 200 680Z'],
      ['red', 'M218 610L230 597 248 600 248 620 232 620ZM258 600L262 580 245 580 255 560 248 545 258 510 285 508 275 530 305 535 300 560 288 572 305 585 325 620 335 648 355 655 350 675 338 690 352 692 300 705 255 712 280 690 300 685 262 672 272 655 268 640 290 635 290 605ZM232 520l10-8-5 20-8 8ZM310 460l8-14-4 22ZM285 495l10-6-5 10Z'],
      ['red', 'M265 745L300 748 305 725 340 722 350 700 365 692 385 708 443 738 435 765 420 795 432 800 430 835 400 850 375 850 372 872 340 862 308 858 315 800 300 775 268 755ZM202 858L215 847 260 848 310 852 340 865 372 870 370 880 330 920 328 945 305 968 265 975 250 985 235 965 230 940 238 880 205 878Z'],
      ['amber', 'M207 878L240 882 232 940 228 965 205 965 200 930Z'],
      ['orange', 'M367 692L395 660 400 640 440 635 460 630 455 602 475 610 490 620 525 612 535 630 540 660 540 695 510 712 525 745 512 765 440 768 443 738 410 720 385 708Z'],
      ['amber', 'M420 795L435 768 510 765 545 735 570 745 565 780 540 788 500 785 470 780 450 800Z'],
      ['yellow', 'M505 712L540 697 590 722 570 740 545 740 525 735ZM412 712l10 5-2 10-8-3Z'],
      ['lime', 'M570 745L600 728 645 732 640 748 585 760Z'],
      ['yellow', 'M522 792L560 785 600 808 600 840 628 872 650 865 655 840 725 840 730 855 712 880 702 895 650 900 640 925 655 920 660 935 640 945 655 975 635 965 612 930 605 875 560 845 530 815Z'],
      ['amber', 'M565 780L585 760 640 750 650 760 620 800 640 830 652 860 628 872 600 840 600 800 575 795Z'],
      ['orange', 'M622 800L650 762 710 752 730 790 748 812 728 842 660 842 640 828Z'],
      ['red', 'M425 805L455 800 480 790 520 780 520 805 505 810 508 830 540 860 590 912 560 905 570 930 555 955 550 915 500 880 470 835 430 840ZM507 948l40 0-2 24ZM450 898l15-8 2 40-18 3ZM453 870l12-10 0 25-8 2ZM363 920l15-5-5 10Z'],
      ['lime', 'M592 858l10-8 12 12-12 14ZM897 850L945 858 985 880 985 893 920 885Z'],
      ['orange', 'M702 882L720 880 728 895 780 880 840 880 890 892 945 885 958 955 925 965 850 965 840 975 800 975 790 985 760 975 720 975 710 935 700 910Z'],
      ['yellow', 'M945 890L990 890 1010 880 1028 905 1015 940 1000 925 970 925Z'],
      ['amber', 'M945 890l25 2 10 28-25-10Z'],
      ['line', 'M625 165L640 182 685 185 700 150 730 132 745 155M630 566L690 570 705 585M675 530L722 545M660 625L670 680 650 725M670 675L760 685 775 665M375 690L415 695 440 650M605 880L640 875 650 865M530 815L600 815'],
    ],
  },
  {
    name: 'africa-middle-east', at: 'translate(700 1200) scale(.33333)', bordered: true, shapes: [
      ['lime', 'M255 90L300 100 360 75 450 70 475 62 485 75 483 95 475 110 490 130 545 145 560 165 600 180 612 165 615 145 640 138 682 158 745 170 775 160 815 168 820 195 815 220 790 190 830 265 858 355 875 372 890 405 935 450 945 478 1050 460 1050 490 1010 570 935 625 885 690 880 720 900 775 905 835 880 870 820 910 830 975 792 1010 790 1040 735 1115 700 1132 610 1145 590 1135 585 1095 565 1045 545 1025 535 950 497 875 500 830 525 785 515 735 505 705 457 640 468 615 468 590 455 565 415 567 395 540 370 535 300 560 225 563 180 535 150 510 145 490 100 455 90 418 103 390 95 322 148 320 148 295 162 290 162 250 208 248 208 222 150 222 190 200 195 155 215 125 240 105Z'],
      ['yellow', 'M255 90L300 100 312 148 285 155 270 180 208 205 208 222 150 222 190 200 195 155 215 125 240 105ZM162 250L208 248 208 232 345 330 378 352 392 355 388 405 335 415 290 435 265 455 255 480 215 485 205 455 100 455 90 418 103 390 95 322 148 320 148 295 162 290ZM215 485L255 485 290 475 335 473 340 540 300 560 225 563 222 530ZM535 455L545 480 535 490 548 520 535 550 557 597 470 597 468 580 455 560 458 545 495 530Z'],
      ['amber', 'M303 100L360 75 450 70 450 105 440 125 460 155 468 210 465 250 475 275 498 288 420 345 378 352 345 330 208 232 208 205 270 185 285 155 312 148ZM385 435L410 432 460 445 520 435 535 455 520 490 495 530 455 545 450 562 415 567 395 540 370 535 370 500 383 480Z'],
      ['orange', 'M682 158L745 170 775 160 815 168 820 195 815 215 790 190 835 290 848 310 683 310Z'],
      ['amber', 'M683 310H848L858 355 875 372 850 385 845 430 815 485 800 490 795 457 775 485 740 495 700 485 665 502 645 440 668 400 668 342 683 340Z'],
      ['yellow', 'M845 422L890 422 925 445 945 485 1005 515 970 550 910 570 860 575 825 550 800 515 812 490ZM812 570L860 575 918 570 908 640 912 650 885 690 860 670 810 640 822 600ZM597 560L620 567 700 555 765 575 768 600 750 620 745 680 765 740 800 760 820 770 818 800 835 840 825 865 795 825 745 845 710 880 655 875 640 860 640 812 668 805 668 785 640 780 637 730 600 740 575 738 560 710 505 708 520 692 555 680 570 650 590 610Z'],
      ['forest', 'M848 395L875 372 890 405 935 447 925 445 890 420 848 422Z'],
      ['green', 'M765 575L810 570 822 600 808 640 750 640 755 610 770 600ZM740 660l8-18 17 2 0 15-15 28ZM627 888L685 882 710 915 740 945 690 998 655 995 630 1017 613 985 613 942 627 942ZM95 436l35-4-8 5-25 3ZM1110 927l6 2 0 4-6-2Z'],
      ['orange', 'M565 1045L605 1048 613 1040 613 985 630 1017 655 995 690 998 740 945 775 948 782 1010 792 1010 790 1040 735 1115 700 1132 610 1145 590 1135 585 1095Z'],
      ['lime', 'M712 1060l20-15 12 12-15 18-15 0ZM765 1010l10-10 15 10 0 12-15 2Z'],
      ['yellow', 'M1022 798L1040 845 1028 850 1015 930 995 988 970 997 945 980 940 945 958 910 952 860 1000 840Z'],
      ['orange', 'M820 198L860 175 850 160 885 155 880 135 910 112 912 75 950 65 978 95 972 130 1005 180 1010 200 1040 245 1070 290 1112 305 1105 340 1000 370 990 385 935 392 910 350 880 310 860 265Z'],
      ['lime', 'M838 75L870 72 925 66 912 110 880 132 882 150 855 162 862 178 830 195 825 190 832 130ZM785 105l28-10-12 12Z'],
      ['yellow', 'M815 165l15-35 0 55-5 10ZM990 190l15-5 10 20-20-2ZM935 380L1000 382 1020 365 1068 358 1078 388 1015 420 950 447 935 430ZM1060 280L1105 275 1122 245 1130 272 1172 305 1145 350 1110 380 1078 388 1068 358 1105 340 1112 305 1070 295ZM663 94h15l20 4-2 4-30-4ZM1048 248l6 2-2 20-5-4Z'],
      ['red bare', 'M955 22L1000 38 1012 30 1020 55 1060 75 1095 70 1130 48 1160 60V255L1140 252 1135 232 1100 240 1050 212 1030 190 1010 185 990 150 972 130 978 95 960 60ZM78 205l3 15ZM92 213l8-4 2 8-8 2ZM108 212l7 0-3 5ZM128 215l12-14-4 12Z'],
      ['line', 'M465 185L468 165 495 145M498 288L535 300 553 290 668 342M547 300L553 370 525 415 520 430M550 520L600 510 645 472M665 502L715 550M535 490L548 520M820 790L850 788 900 775M497 872L600 875 655 880 685 882M710 880L735 855 765 850 795 865 795 910 775 945M238 262h25M238 262L252 405 165 410 165 440M100 392L145 392 165 415M290 475L285 555M470 597L535 600 520 660 500 675M745 780L750 815 700 790 640 780M870 155L920 160 965 198 1005 200M340 470L345 535M335 420L350 445 385 445M145 490L180 490 185 525 215 520M735 745L735 790 750 815'],
    ],
  },
]
</script>

<template>
  <div class="screen">
    <header class="appbar">
      <div class="status">
        <span class="time">11:21 PM</span>
        <span class="date">Mon Aug 3</span>
        <svg class="wifi" viewBox="0 0 28 22">
          <path d="M0.8 7.2a18.6 18.6 0 0 1 26.4 0l-2.8 2.9a14.6 14.6 0 0 0-20.8 0Z" />
          <path d="M5.6 12.1a11.8 11.8 0 0 1 16.8 0l-2.8 2.9a7.9 7.9 0 0 0-11.2 0Z" />
          <path d="M10.3 16.9a5.2 5.2 0 0 1 7.4 0L14 20.8Z" />
        </svg>
        <span class="percent">100%</span>
        <svg class="battery" viewBox="0 0 52 24">
          <rect x="1" y="1" width="45.500" height="22" rx="7" fill="none" stroke="#fff" stroke-opacity=".45" stroke-width="2" />
          <rect x="4" y="4" width="39.500" height="16" rx="4" />
          <path d="M48.500 8q3 1.500 3 4t-3 4Z" fill-opacity=".5" />
        </svg>
      </div>
      <div class="toolbar">
        <h1>Covid-19</h1>
        <svg class="tool" viewBox="0 0 24 24">
          <path d="M15.500 14h-.79l-.28-.27A6.471 6.471 0 0 0 16 9.500 6.500 6.500 0 1 0 9.500 16c1.610 0 3.090-.59 4.230-1.570l.27.28v.79l5 4.990L20.490 19l-4.990-5zm-6 0C7.010 14 5 11.990 5 9.500S7.010 5 9.500 5 14 7.010 14 9.500 11.990 14 9.500 14z" />
        </svg>
        <svg class="tool" viewBox="0 0 24 24">
          <path d="M19.430 12.980c.04-.32.07-.64.07-.98s-.03-.66-.07-.98l2.110-1.650c.19-.15.24-.42.12-.64l-2-3.460c-.12-.22-.39-.3-.61-.22l-2.490 1c-.52-.4-1.080-.73-1.690-.98l-.38-2.650A.488.488 0 0 0 14 2h-4c-.25 0-.46.18-.49.42l-.38 2.650c-.61.25-1.170.59-1.690.98l-2.490-1c-.23-.09-.49 0-.61.22l-2 3.460c-.13.22-.07.49.12.64l2.110 1.650c-.04.32-.07.65-.07.98s.03.66.07.98l-2.110 1.650c-.19.15-.24.42-.12.64l2 3.460c.12.22.39.3.61.22l2.490-1c.52.4 1.080.73 1.690.98l.38 2.650c.03.24.24.42.49.42h4c.25 0 .46-.18.49-.42l.38-2.650c.61-.25 1.170-.59 1.690-.98l2.490 1c.23.09.49 0 .61-.22l2-3.460c.12-.22.07-.49-.12-.64l-2.110-1.650zM12 15.500c-1.930 0-3.500-1.570-3.500-3.500s1.570-3.500 3.500-3.500 3.500 1.570 3.500 3.500-1.570 3.500-3.500 3.500z" />
        </svg>
      </div>
    </header>

    <main class="content">
      <section class="overview">
        <div class="cards">
          <article v-for="s in stats" :key="s.label" class="card">
            <div class="card-label">{{ s.label }}</div>
            <div class="card-value">{{ s.value }}</div>
          </article>
        </div>
        <div class="map">
          <svg viewBox="0 376 1720 1672">
            <g v-for="s in sheets" :key="s.name" :transform="s.at" :class="{ bordered: s.bordered }">
              <path v-for="(p, i) in s.shapes" :key="i" :class="p[0]" :d="p[1]" />
            </g>
            <g>
              <path class="purple" d="M57 1305h4v2h-4ZM66 1308l5 2-3 1ZM76 1311l6 3-2 4-4-2Z" />
              <path class="forest" d="M776 1034h4v3h-4ZM778 1040h2v3h-2Z" />
            </g>
          </svg>
          <ul class="legend">
            <li v-for="l in legend" :key="l[0]"><i :class="l[0]"></i><span>{{ l[1] }}</span></li>
          </ul>
        </div>
      </section>

      <section class="ranking">
        <div class="head">
          <div class="toggle">
            <span class="total">Total</span>
            <span class="new">New</span>
            <svg viewBox="0 0 94 52"><path d="M0 52L94 0" /></svg>
          </div>
          <div class="deaths">
            <svg class="arrow" viewBox="0 0 16 18"><path d="M8 .5V17M1 10l7 7 7-7" /></svg>
            <span>Deaths</span>
          </div>
          <div class="cases">Cases</div>
        </div>
        <div v-for="(c, i) in countries" :key="c[0]" class="row">
          <div class="name">{{ i + 1 }}. {{ c[0] }}</div>
          <div class="deaths">{{ c[1] }}</div>
          <div class="cases">{{ c[2] }}</div>
        </div>
      </section>
    </main>
    <div class="home-bar"></div>
  </div>
</template>

<style>
body {
  margin: 0;
  overflow: hidden;
}
</style>

<style scoped>
.screen {
  position: relative;
  display: flex;
  flex-direction: column;
  width: 2732px;
  height: 2048px;
  overflow: hidden;
  background: #fafafa;
  color: #212121;
  font-family: Inter, "Liberation Sans", sans-serif;
  font-weight: 350;
}
.appbar {
  position: relative;
  z-index: 2;
  height: 160px;
  flex: none;
  background: #2196f3;
  color: #fff;
  fill: #fff;
  box-shadow: 0 4px 10px rgba(0, 0, 0, .22), 0 6px 18px rgba(0, 0, 0, .12);
}
.status {
  display: flex;
  align-items: center;
  height: 48px;
  padding: 0 31px 0 32px;
  font-size: 23.500px;
  font-weight: 500;
  line-height: 48px;
}
.time { width: 122px; letter-spacing: .8px; }
.date { flex: 1; letter-spacing: .1px; }
.wifi { width: 28px; height: 22px; margin-right: 7px; }
.percent { width: 69px; letter-spacing: .3px; }
.battery { width: 52px; height: 24px; }
.toolbar {
  display: flex;
  align-items: center;
  height: 112px;
  padding: 0 24px 0 32px;
}
h1 {
  flex: 1;
  margin: 0;
  font-size: 39px;
  font-weight: 550;
  letter-spacing: .7px;
  line-height: 112px;
}
.tool { width: 48px; height: 48px; margin-left: 48px; }
.content { display: flex; flex: 1; min-height: 0; }
.overview { display: flex; flex-direction: column; width: 1720px; }
.cards { display: flex; gap: 16px; height: 200px; padding: 8px 7px 8px 8px; }
.card {
  flex: 1;
  box-sizing: border-box;
  height: 199px;
  padding: 17px 16px 0 16px;
  border-radius: 8px;
  background: #fff;
  box-shadow: 0 2px 3px rgba(0, 0, 0, .22), 0 0 3px rgba(0, 0, 0, .1);
}
.card-label { font-size: 31px; line-height: 36px; letter-spacing: .4px; }
.card-value { margin-top: 32px; font-size: 62px; line-height: 84px; letter-spacing: 2.800px; }
.card:last-child .card-value { letter-spacing: 1.600px; }
.map { position: relative; height: 1672px; }
.map > svg { display: block; width: 1720px; height: 1672px; }
.legend {
  position: absolute;
  left: 16px;
  top: 1256px;
  display: flex;
  flex-direction: column;
  gap: 4px;
  margin: 0;
  padding: 0;
  list-style: none;
}
.legend li { display: flex; gap: 4px; height: 32px; font-size: 23.500px; line-height: 31px; color: #000; }
.legend i { width: 16px; height: 32px; }
.ranking { flex: 1; font-size: 27.500px; }
.head, .row { display: flex; align-items: center; height: 66px; padding-left: 17px; }
.head { height: 65px; color: #7a7a7a; font-size: 23.500px; letter-spacing: .3px; }
.head .toggle { position: relative; width: 94px; height: 65px; margin: 0 17px 0 601px; }
.toggle .total { position: absolute; left: 2px; top: 9px; font-size: 26px; line-height: 30px; letter-spacing: .6px; color: #212121; }
.toggle .new {
  position: absolute;
  left: 34px;
  top: 25px;
  line-height: 30px;
  clip-path: polygon(0 68%, 60% 0, 100% 0, 100% 100%, 0 100%);
}
.toggle svg { position: absolute; left: 0; top: 14px; width: 94px; height: 52px; fill: none; stroke: #999; stroke-width: 1.500; }
.head .deaths { display: flex; align-items: center; }
.arrow { width: 16px; height: 18px; margin-right: 8px; fill: none; stroke: #7a7a7a; stroke-width: 2; }
.name { width: 711px; letter-spacing: .4px; white-space: nowrap; }
.deaths { width: 150px; }
.row .deaths, .row .cases { color: #808080; font-size: 23.500px; letter-spacing: .7px; }
.home-bar {
  position: absolute;
  left: 1021px;
  top: 2022px;
  width: 690px;
  height: 10px;
  border-radius: 5px;
  background: #000;
}

.black { fill: #212121; background: #212121; }
.purple { fill: #6a1b9a; background: #6a1b9a; }
.maroon { fill: #b71c1c; background: #b71c1c; }
.red { fill: #e53935; background: #e53935; }
.orange { fill: #ef6c00; background: #ef6c00; }
.amber { fill: #ff9800; background: #ff9800; }
.yellow { fill: #fbc02d; background: #fbc02d; }
.lime { fill: #c0ca33; background: #c0ca33; }
.green { fill: #4caf50; background: #4caf50; }
.forest { fill: #388e3c; background: #388e3c; }
.sea { fill: #fafafa; }
.bordered path { stroke: rgba(255, 255, 255, .22); stroke-width: 1px; vector-effect: non-scaling-stroke; }
.bordered .bare, .bordered .sea { stroke: none; }
.map path[class^="line"] { fill: none; vector-effect: non-scaling-stroke; }
.map .line { stroke: rgba(255, 255, 255, .35); stroke-width: 1px; }
.map .line-sea, .map .line-sea-dot { stroke: #fafafa; stroke-width: 1.500px; }
.map .line-sea-dot { stroke-width: 2px; stroke-dasharray: 5 3 9 2; }
.map .line-orange { stroke: #ef6c00; stroke-width: 4.500px; }
.map .line-orange-dot { stroke: #ef6c00; stroke-width: 3px; stroke-dasharray: 7 2 4 2; }
.map .line-forest { stroke: #388e3c; stroke-width: 2.500px; }
.map .line-green-dot { stroke: #4caf50; stroke-width: 2px; stroke-dasharray: 3 5; }
.map .line-lime-dot { stroke: #c0ca33; stroke-width: 1.500px; stroke-dasharray: 3 5; }
.map .line-red-dot { stroke: #e53935; stroke-width: 1.500px; stroke-dasharray: 7 5; }
.map .line-amber-dot { stroke: #ff9800; stroke-width: 1.500px; stroke-dasharray: 3 7; }
</style>
